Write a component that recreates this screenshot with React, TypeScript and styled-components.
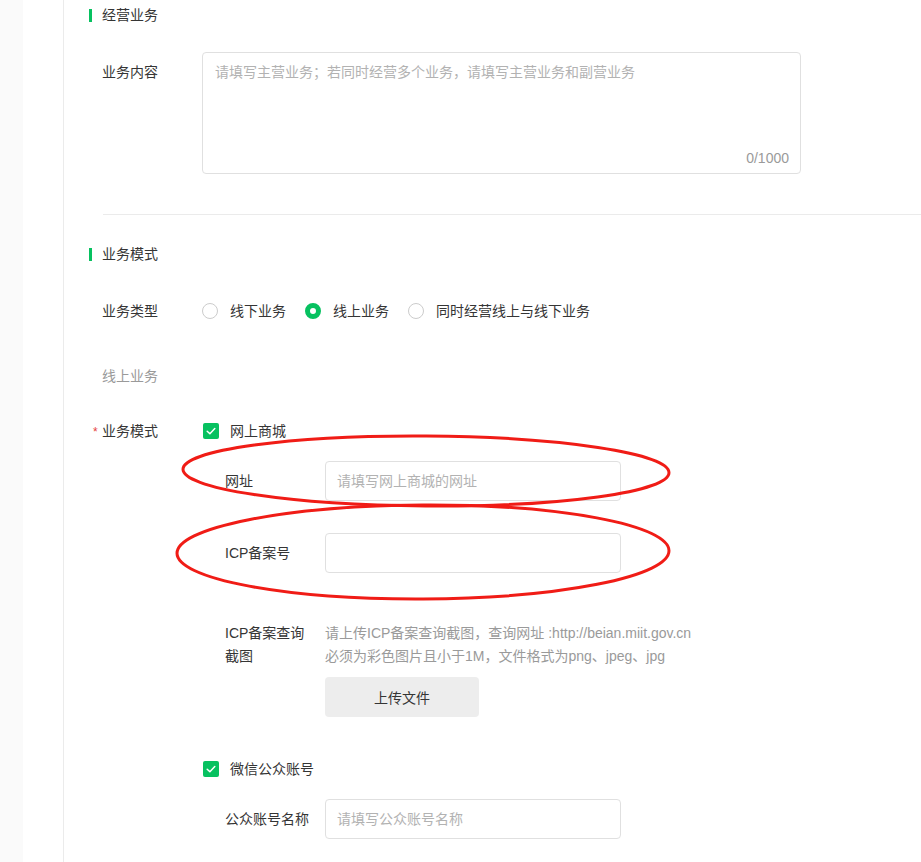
import React from "react";
import styled, { createGlobalStyle } from "styled-components";

const GlobalStyle = createGlobalStyle`
  html, body {
    margin: 0;
    padding: 0;
    background: #ffffff;
  }
  body {
    font-family: "Liberation Sans", "Noto Sans CJK SC", sans-serif;
    font-size: 14px;
    color: #353535;
  }
`;

// Colours
const Colors = {
  green: "#07c160",
  text: "#353535",
  gray: "#9a9a9a",
  placeholder: "#b2b2b2",
  border: "#e0e0e0",
  line: "#ebebeb",
};

// Data
const bizTypes = [
  { label: "线下业务", checked: false },
  { label: "线上业务", checked: true },
  { label: "同时经营线上与线下业务", checked: false },
];

const Check = () => (
  <svg width="12" height="12" viewBox="0 0 12 12">
    <path d="M2.2 6.2 L4.9 8.7 L9.8 3.6" fill="none" stroke="#fff" strokeWidth="1.5" strokeLinecap="round" strokeLinejoin="round" />
  </svg>
);

const App: React.FC = () => {
  return (
    <>
      <GlobalStyle />
      <Styled.Page>
        <Styled.Strip />
        <Styled.Gutter />
        <Styled.Main>
          <Styled.SectionTitle>经营业务</Styled.SectionTitle>

          <Styled.Row $top={27}>
            <Styled.Label $pad={10}>业务内容</Styled.Label>
            <Styled.TextArea>
              <Styled.Placeholder>
                请填写主营业务；若同时经营多个业务，请填写主营业务和副营业务
              </Styled.Placeholder>
              <Styled.Counter>0/1000</Styled.Counter>
            </Styled.TextArea>
          </Styled.Row>

          <Styled.Divider />

          <Styled.SectionTitle $top={29}>业务模式</Styled.SectionTitle>

          <Styled.Row $top={37}>
            <Styled.Label>业务类型</Styled.Label>
            <Styled.Options>
              {bizTypes.map((t) => (
                <Styled.Option key={t.label}>
                  <Styled.Radio $checked={t.checked} />
                  {t.label}
                </Styled.Option>
              ))}
            </Styled.Options>
          </Styled.Row>

          <Styled.Row $top={45}>
            <Styled.Label $muted>线上业务</Styled.Label>
          </Styled.Row>

          <Styled.Row $top={35}>
            <Styled.Label $required>业务模式</Styled.Label>
            <Styled.Option>
              <Styled.Checkbox>
                <Check />
              </Styled.Checkbox>
              网上商城
            </Styled.Option>
          </Styled.Row>

          <Styled.SubRow $top={20}>
            <Styled.SubLabel>网址</Styled.SubLabel>
            <Styled.Input>请填写网上商城的网址</Styled.Input>
          </Styled.SubRow>

          <Styled.SubRow $top={32}>
            <Styled.SubLabel>ICP备案号</Styled.SubLabel>
            <Styled.Input />
          </Styled.SubRow>

          <Styled.SubRow $top={49} $start>
            <Styled.SubLabel $wrap>ICP备案查询截图</Styled.SubLabel>
            <Styled.UploadBox>
              <Styled.Hint>
                请上传ICP备案查询截图，查询网址 :http://beian.miit.gov.cn
                <br />
                必须为彩色图片且小于1M，文件格式为png、jpeg、jpg
              </Styled.Hint>
              <Styled.UploadButton>上传文件</Styled.UploadButton>
            </Styled.UploadBox>
          </Styled.SubRow>

          <Styled.Row $top={42}>
            <Styled.Label />
            <Styled.Option>
              <Styled.Checkbox>
                <Check />
              </Styled.Checkbox>
              微信公众账号
            </Styled.Option>
          </Styled.Row>

          <Styled.SubRow $top={20}>
            <Styled.SubLabel>公众账号名称</Styled.SubLabel>
            <Styled.Input>请填写公众账号名称</Styled.Input>
          </Styled.SubRow>
        </Styled.Main>

        {/* red annotation marks drawn over the form */}
        <Styled.Marks width="921" height="862" viewBox="0 0 921 862">
          <ellipse cx="426" cy="471" rx="243" ry="35" transform="rotate(0.4 426 471)" />
          <ellipse cx="423" cy="552" rx="246" ry="47" transform="rotate(-0.3 423 552)" />
        </Styled.Marks>
      </Styled.Page>
    </>
  );
};

export default App;

const Styled = {
  Page: styled.div`
    position: relative;
    display: flex;
    width: 921px;
    height: 862px;
    overflow: hidden;
  `,
  Strip: styled.div`
    width: 23px;
    flex-shrink: 0;
    background: #fafafa;
  `,
  Gutter: styled.div`
    width: 40px;
    flex-shrink: 0;
  `,
  Main: styled.div`
    flex: 1;
    border-left: 1px solid ${Colors.line};
    padding-left: 25px;
    display: flex;
    flex-direction: column;
  `,
  SectionTitle: styled.div<{ $top?: number }>`
    display: flex;
    align-items: center;
    gap: 10px;
    margin-top: ${(p) => p.$top ?? 5}px;
    height: 20px;
    line-height: 20px;
    &::before {
      content: "";
      width: 3px;
      height: 13px;
      background: ${Colors.green};
    }
  `,
  Row: styled.div<{ $top: number }>`
    display: flex;
    align-items: flex-start;
    margin-top: ${(p) => p.$top}px;
    margin-left: 13px;
    line-height: 20px;
  `,
  Label: styled.div<{ $pad?: number; $muted?: boolean; $required?: boolean }>`
    position: relative;
    width: 100px;
    flex-shrink: 0;
    padding-top: ${(p) => p.$pad ?? 0}px;
    color: ${(p) => (p.$muted ? Colors.gray : Colors.text)};
    ${(p) =>
      p.$required &&
      `
      &::before {
        content: "*";
        position: absolute;
        left: -9px;
        top: 1px;
        color: #e64340;
        font-size: 12px;
      }
    `}
  `,
  TextArea: styled.div`
    position: relative;
    box-sizing: border-box;
    width: 599px;
    height: 122px;
    border: 1px solid ${Colors.border};
    border-radius: 4px;
    padding: 9px 12px;
  `,
  Placeholder: styled.div`
    color: ${Colors.placeholder};
    line-height: 20px;
  `,
  Counter: styled.div`
    position: absolute;
    right: 11px;
    bottom: 7px;
    color: ${Colors.gray};
    line-height: 16px;
  `,
  Divider: styled.div`
    margin-top: 40px;
    margin-left: 14px;
    height: 1px;
    background: ${Colors.line};
  `,
  Options: styled.div`
    display: flex;
    gap: 19px;
  `,
  Option: styled.label`
    display: flex;
    align-items: center;
    gap: 12px;
    height: 20px;
    color: ${Colors.text};
  `,
  Radio: styled.span<{ $checked: boolean }>`
    box-sizing: border-box;
    width: 16px;
    height: 16px;
    border-radius: 50%;
    border: ${(p) =>
      p.$checked ? `5px solid ${Colors.green}` : "1px solid #cccccc"};
    background: #fff;
  `,
  Checkbox: styled.span`
    display: flex;
    align-items: center;
    justify-content: center;
    width: 16px;
    height: 16px;
    margin-left: 1px;
    margin-right: -1px;
    border-radius: 2px;
    background: ${Colors.green};
  `,
  SubRow: styled.div<{ $top: number; $start?: boolean }>`
    display: flex;
    align-items: ${(p) => (p.$start ? "flex-start" : "center")};
    margin-top: ${(p) => p.$top}px;
    margin-left: 136px;
  `,
  SubLabel: styled.div<{ $wrap?: boolean }>`
    box-sizing: border-box;
    width: 100px;
    flex-shrink: 0;
    padding-right: ${(p) => (p.$wrap ? 12 : 0)}px;
    line-height: 23px;
    color: ${Colors.text};
  `,
  Input: styled.div`
    box-sizing: border-box;
    width: 296px;
    height: 40px;
    border: 1px solid ${Colors.border};
    border-radius: 4px;
    padding: 0 11px;
    line-height: 38px;
    color: ${Colors.placeholder};
  `,
  UploadBox: styled.div`
    display: flex;
    flex-direction: column;
    align-items: flex-start;
  `,
  Hint: styled.div`
    line-height: 23px;
    color: ${Colors.gray};
    white-space: nowrap;
  `,
  UploadButton: styled.button`
    margin-top: 9px;
    width: 154px;
    height: 40px;
    border: none;
    border-radius: 4px;
    background: #ededed;
    color: ${Colors.text};
    font-family: inherit;
    font-size: 14px;
  `,
  Marks: styled.svg`
    position: absolute;
    top: 0;
    left: 0;
    pointer-events: none;
    ellipse {
      fill: none;
      stroke: #f01c16;
      stroke-width: 3;
    }
  `,
};
